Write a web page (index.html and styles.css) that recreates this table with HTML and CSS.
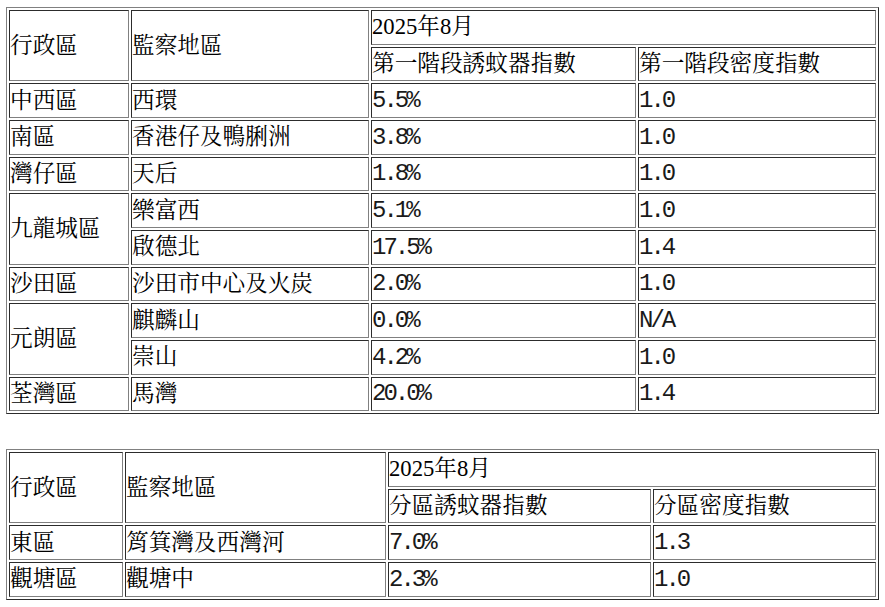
FILE: index.html
```html
<!DOCTYPE html>
<html lang="zh-Hant">
<head>
<meta charset="utf-8">
<title>誘蚊器指數</title>
<link rel="stylesheet" href="styles.css">
</head>
<body>
<table class="grid grid-a">
  <colgroup>
    <col class="a1"><col class="a2"><col class="a3"><col class="a4">
  </colgroup>
  <tr>
    <td rowspan="2">行政區</td>
    <td rowspan="2">監察地區</td>
    <td colspan="2">2025年8月</td>
  </tr>
  <tr>
    <td>第一階段誘蚊器指數</td>
    <td>第一階段密度指數</td>
  </tr>
  <tr><td>中西區</td><td>西環</td><td><span class="num">5.5%</span></td><td><span class="num">1.0</span></td></tr>
  <tr><td>南區</td><td>香港仔及鴨脷洲</td><td><span class="num">3.8%</span></td><td><span class="num">1.0</span></td></tr>
  <tr><td>灣仔區</td><td>天后</td><td><span class="num">1.8%</span></td><td><span class="num">1.0</span></td></tr>
  <tr><td rowspan="2">九龍城區</td><td>樂富西</td><td><span class="num">5.1%</span></td><td><span class="num">1.0</span></td></tr>
  <tr><td>啟德北</td><td><span class="num">17.5%</span></td><td><span class="num">1.4</span></td></tr>
  <tr><td>沙田區</td><td>沙田市中心及火炭</td><td><span class="num">2.0%</span></td><td><span class="num">1.0</span></td></tr>
  <tr><td rowspan="2">元朗區</td><td>麒麟山</td><td><span class="num">0.0%</span></td><td><span class="num">N/A</span></td></tr>
  <tr><td>崇山</td><td><span class="num">4.2%</span></td><td><span class="num">1.0</span></td></tr>
  <tr><td>荃灣區</td><td>馬灣</td><td><span class="num">20.0%</span></td><td><span class="num">1.4</span></td></tr>
</table>

<table class="grid grid-b">
  <colgroup>
    <col class="b1"><col class="b2"><col class="b3"><col class="b4">
  </colgroup>
  <tr>
    <td rowspan="2">行政區</td>
    <td rowspan="2">監察地區</td>
    <td colspan="2">2025年8月</td>
  </tr>
  <tr>
    <td>分區誘蚊器指數</td>
    <td>分區密度指數</td>
  </tr>
  <tr><td>東區</td><td>筲箕灣及西灣河</td><td><span class="num">7.0%</span></td><td><span class="num">1.3</span></td></tr>
  <tr><td>觀塘區</td><td>觀塘中</td><td><span class="num">2.3%</span></td><td><span class="num">1.0</span></td></tr>
</table>
</body>
</html>
```

FILE: styles.css
```css
html, body {
  background: #ffffff;
}

body {
  margin: 7px 0 0 6px;
  color: #000000;
  font-family: "Liberation Serif", "Noto Serif CJK TC", "Noto Sans CJK TC", serif;
  font-size: 22.67px;
}

.grid {
  border: 1px outset grey;
  border-collapse: separate;
  border-spacing: 2px;
  table-layout: fixed;
  width: 873px;
}

.grid tr {
  height: 34.67px;
}

.grid td {
  border: 1px inset grey;
  padding: 0 1px 0 0;
  line-height: 22px;
  vertical-align: middle;
  text-align: left;
  white-space: nowrap;
  overflow: hidden;
}

.grid-b {
  margin-top: 34.7px;
}

.a1 { width: 120px; }
.a2 { width: 238px; }
.a3 { width: 265px; }
.a4 { width: 238px; }

.b1 { width: 114px; }
.b2 { width: 261px; }
.b3 { width: 263px; }
.b4 { width: 223px; }

.num {
  font-family: "Liberation Mono", monospace;
  font-size: 24px;
  letter-spacing: -3px;
  line-height: 22px;
  color: #1a1a1a;
}
```
